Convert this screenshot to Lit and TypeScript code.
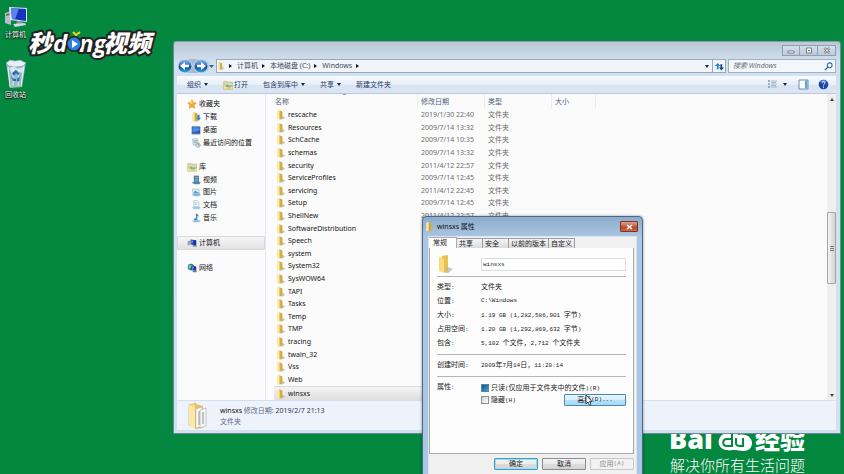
import { LitElement, html, svg, css } from "lit";
import { customElement, property } from "lit/decorators.js";
import { classMap } from "lit/directives/class-map.js";

const folder = svg`
  <path d="M2 1l4-1v12l-4 1z" fill="#f3d67c"/><path d="M6 1l3 1v11H3l3-1z" fill="#d8a83a"/>
  <path d="M2 1l2-.5v12.500l-2-.5z" fill="#fdeeb0"/><path d="M9 8l4 3-4 2H7z" fill="#c4b68e" opacity=".8"/>
  <path d="M6 1v11" stroke="#b98c28" stroke-width=".6"/>`;

const library = svg`
  <path d="M1 2h5l1 1h7v10H1z" fill="#f1d272"/><path d="M3 4h10v6H3z" fill="#bfe0ee"/>
  <path d="M3 8l3-2 3 2 4-1v3H3z" fill="#77b987"/><path d="M1 9h4v4H1zM11 9h3v4h-3z" fill="#f9e7a5"/>
  <path d="M1 2h5l1 1h7v10H1z" fill="none" stroke="#c39a3c" stroke-width=".6"/>`;

const icons: Record<string, unknown> = {
  folder,
  library,
  star: svg`<path d="M7 1l2 4 4 .6-3 3 .8 4.4L7 11l-3.800 2L4 8.600 1 5.600 5 5z" fill="#f7a92b" stroke="#dd7d13" stroke-width=".6"/><path d="M7 2l1 4-4 1z" fill="#ffe08a"/>`,
  download: svg`${folder}<path d="M9 4h3v4h2l-3.500 4L7 8h2z" fill="#2a86c9"/>`,
  desk: svg`<path d="M1 2h12v10H1z" fill="#1f55b5"/><path d="M2 3h10v5L2 11z" fill="#4b8be2"/><path d="M1 12h12v1H1z" fill="#24416e"/>`,
  recent: svg`<path d="M2 1h7l1 3-1 6H3z" fill="#d8e3ea" stroke="#8fa3b3" stroke-width=".6"/><path d="M4 4h5M4 6h4" stroke="#7490a5"/><circle cx="10" cy="10" r="3" fill="#dcebf5" stroke="#5a7f9c" stroke-width=".8"/><path d="M10 8v2h2" stroke="#345" fill="none" stroke-width=".7"/>`,
  video: svg`<path d="M4 1h7v9H4z" fill="#3c6079"/><path d="M5 2h5v3H5zM5 6h5v3H5z" fill="#79acd0"/><path d="M1 11l4-2h6l3 2-3 2H5z" fill="#4d86b1"/>`,
  picture: svg`<path d="M2 3h9l1 6H3z" fill="#e6f1f8" stroke="#6d9cbd" stroke-width=".7"/><path d="M3 8l3-3 3 2 2 1v1z" fill="#5ba0cc"/><path d="M1 11l4-2h6l3 2-3 2H5z" fill="#7fb8dc"/>`,
  doc: svg`<path d="M4 1h5l2 2v7H4z" fill="#f5f9fc" stroke="#8ba8bd" stroke-width=".7"/><path d="M5 4h4M5 6h4" stroke="#9ab3c4" stroke-width=".8"/><path d="M1 11l4-2h6l3 2-3 2H5z" fill="#9dcbe6"/>`,
  music: svg`<path d="M8 1v8" stroke="#1f6fb8" stroke-width="1.500"/><path d="M8 1c1 2 3 2 3 5-1-2-2-2-3-2z" fill="#1f6fb8"/><ellipse cx="6.500" cy="9" rx="2.300" ry="1.600" fill="#2b82cf"/><path d="M1 11l4-1h6l3 1-3 2H5z" fill="#86bfe2"/>`,
  computer: svg`<path d="M5 2l8 1v7l-8-1z" fill="#1735a8"/><path d="M6 3l3 .4-2 5.600-1-.1z" fill="#6f93ea"/><path d="M1 4h3v6H1z" fill="#8f9cab"/><path d="M8 10h5l1 2H8z" fill="#58697a"/>`,
  network: svg`<circle cx="5.500" cy="5.500" r="4.500" fill="#2c8b86"/><path d="M2 3c2 1 4-1 5 1s-2 3-4 4z" fill="#8bd0a0"/><path d="M6 4l7 1v6l-7-1z" fill="#1a37a5"/><path d="M7 5l3 .5-2 4H7z" fill="#6d96ea"/><path d="M8 11h5l1 2H8z" fill="#6b7c8d"/>`,
};

const icon = (name: string) =>
  html`<svg class="ico" viewBox="0 0 14 14" aria-hidden="true">${icons[name]}</svg>`;

const navGroups: { label: string; icon: string; items: [string, string][]; active?: boolean }[] = [
  { label: "收藏夹", icon: "star", items: [["download", "下载"], ["desk", "桌面"], ["recent", "最近访问的位置"]] },
  { label: "库", icon: "library", items: [["video", "视频"], ["picture", "图片"], ["doc", "文档"], ["music", "音乐"]] },
  { label: "计算机", icon: "computer", items: [], active: true },
  { label: "网络", icon: "network", items: [] },
];

const files: [string, string][] = [
  ["rescache", "2019/1/30 22:40"],
  ["Resources", "2009/7/14 13:32"],
  ["SchCache", "2009/7/14 10:35"],
  ["schemas", "2009/7/14 13:32"],
  ["security", "2011/4/12 22:57"],
  ["ServiceProfiles", "2009/7/14 12:45"],
  ["servicing", "2011/4/12 22:45"],
  ["Setup", "2009/7/14 12:45"],
  ["ShellNew", "2011/4/12 22:57"],
  ["SoftwareDistribution", ""],
  ["Speech", ""],
  ["system", ""],
  ["System32", ""],
  ["SysWOW64", ""],
  ["TAPI", ""],
  ["Tasks", ""],
  ["Temp", ""],
  ["TMP", ""],
  ["tracing", ""],
  ["twain_32", ""],
  ["Vss", ""],
  ["Web", ""],
  ["winsxs", ""],
];

const base = css`
  :host, * { box-sizing: border-box; }
  button, input { font: inherit; color: inherit; margin: 0; padding: 0; border: 0; background: none; outline: 0; }
  button { display: flex; align-items: center; white-space: nowrap; }
  .ico { width: 10px; height: 10px; flex: none; display: block; }
`;

@customElement("explorer-window")
export class ExplorerWindow extends LitElement {
  static styles = [base, css`
    :host {
      display: flex; flex-direction: column; padding: 0 4px 3px 3px;
      border: 1px solid #6f8797; border-top-color: #8b9ca9; border-radius: 3px 3px 0 0;
      background: linear-gradient(#b9c7d7, #d2e0ee 20px, #d3e1f1 60px, #d3e0f0);
      font: 7px/12px "Noto Sans", "Noto Sans CJK SC", sans-serif; color: #111;
    }
    .caption { display: flex; justify-content: flex-end; height: 17px; padding-top: 3px; }
    .caption button { width: 18px; height: 11px; justify-content: center; border: 1px solid #8fa0b2; border-left-width: 0; background: linear-gradient(#d4dfeb, #bccada); }
    .caption button:first-child { border-left-width: 1px; }
    .caption svg { width: 8px; height: 7px; }
    .address { display: flex; align-items: center; height: 14px; gap: 2px; }
    .history { display: flex; align-items: center; width: 37px; }
    .history svg { width: 37px; height: 16px; flex: none; }
    .path { flex: 1; display: flex; align-items: center; height: 14px; border: 1px solid #9aa9b8; background: #f1f5fa; color: #3a4a5c; }
    .path .ico { width: 8px; }
    .crumb::after { content: ""; border: 2px solid transparent; border-left: 3px solid #111; border-right: 0; margin: 0 5px 0 4px; }
    .drop { margin-left: auto; width: 10px; justify-content: center; }
    .drop::after, .menu::after { content: ""; border: 2px solid transparent; border-top: 3px solid #14264a; border-bottom: 0; }
    .refresh { width: 13px; height: 12px; justify-content: center; border-left: 1px solid #9aa9b8; }
    .refresh svg { width: 9px; height: 9px; }
    .search { display: flex; align-items: center; width: 108px; height: 14px; border: 1px solid #a3b1bf; background: #f3f6fa; }
    .search input { flex: 1; min-width: 0; padding-left: 4px; font-style: italic; }
    .search input::placeholder { color: #67717c; opacity: 1; }
    .search svg { width: 9px; height: 9px; margin: 0 2px; }
    .toolbar { display: flex; align-items: center; height: 18px; margin-top: 3px; padding: 0 7px 0 10px; color: #1f3a66; border-bottom: 1px solid #b9c8dc;
      background: linear-gradient(#f8fbff, #e8eff9 50%, #d9e4f3 51%, #dbe6f4); }
    .menu::after { margin-left: 3px; }
    .menu, .tool { margin-right: 15px; }
    .tool .ico { margin-right: 1px; }
    .spacer { flex: 1; }
    .viewico { width: 11px; height: 11px; }
    .toolbar .view { margin-right: 11px; }
    .toolbar .view::after { margin-left: 5px; }
    .toolbar .pane { margin-right: 9px; }
    .body { display: flex; background: #fbfbfb; }
    nav { width: 89px; flex: none; border-right: 1px solid #dfe9f5; padding-top: 4px; display: flex; flex-direction: column; gap: 12px; }
    nav ul { list-style: none; margin: 0; padding: 0; display: grid; grid-auto-rows: 1fr; }
    .g4 { height: 51px; } .g5 { height: 63px; } .g1 { height: 13px; }
    nav li { display: flex; align-items: center; gap: 2px; padding-left: 14px; }
    nav li:first-child { padding-left: 10px; }
    nav li.active:first-child { padding-left: 9px; border: 1px solid #d9d9d9; border-radius: 1px; background: linear-gradient(#f6f6f6, #e1e1e1); }
    .files { flex: 1; min-width: 0; padding-left: 8px; }
    table { width: 100%; height: 306px; border-collapse: separate; border-spacing: 0; table-layout: fixed; }
    .cn { width: 144px; } .cd { width: 67px; } .ct { width: 67px; } .cs { width: 44px; }
    th, td { padding: 0; text-align: left; font-weight: 400; white-space: nowrap; line-height: 12px; }
    th { height: 15px; padding-top: 1px; color: #4c607a; border-right: 1px solid #e6edf5; padding-left: 3px; }
    th:first-child { padding-left: 1px; background: linear-gradient(#7ba7c8, #7ba7c8) 69px 0 / 3px 1px no-repeat; }
    th:last-child { border: 0; }
    td { color: #6d6d6d; padding-left: 3px; }
    td.name { color: #151515; padding-left: 2px; }
    .cell { display: flex; align-items: center; gap: 2px; }
    tr.selected td { background: linear-gradient(#f4f4f4, #dedede); border-top: 1px solid #d9d9d9; }
    tr.selected td:last-child { background: none; border: 0; }
    .scroll { width: 9px; flex: none; display: flex; flex-direction: column; align-items: center; background: #efefef; padding: 4px 0 3px; }
    .up, .down { border: 2px solid transparent; }
    .up { border-bottom: 3px solid #444; border-top: 0; }
    .down { border-top: 3px solid #444; border-bottom: 0; margin-top: auto; }
    .thumb { width: 9px; height: 72px; margin-top: 111px; border: 1px solid #a5a5a5; border-radius: 1px; background: linear-gradient(90deg, #f5f5f5, #d3d3d3); display: flex; align-items: center; justify-content: center; }
    .thumb::after { content: ""; width: 4px; height: 5px; background: repeating-linear-gradient(#777 0 1px, transparent 1px 2px); }
    .details { display: flex; align-items: center; height: 30px; padding-left: 11px; gap: 12px; background: #edf2fb; border-top: 1px solid #d2dfec; }
    .details svg { width: 20px; height: 28px; }
    .details p { margin: 0; line-height: 11px; color: #5d6d83; }
    .details b { font-weight: 400; color: #111; }
    .details span { color: #26385a; }
  `];

  render() {
    return html`
      <div class="caption">
        <button aria-label="最小化"><svg viewBox="0 0 8 7"><path d="M1 4h6v2H1z" fill="#fff" stroke="#56606c" stroke-width=".7"/></svg></button>
        <button aria-label="最大化"><svg viewBox="0 0 8 7"><path d="M1.500 1h5v5h-5z" fill="#fff" stroke="#56606c" stroke-width=".8"/><path d="M3 3h2v1H3z" fill="#56606c"/></svg></button>
        <button aria-label="关闭"><svg viewBox="0 0 8 7"><path d="M1.500 1l5 5m0-5l-5 5" stroke="#56606c" stroke-width="2.200"/><path d="M1.500 1l5 5m0-5l-5 5" stroke="#fff"/></svg></button>
      </div>
      <div class="address">
        <div class="history">
          <svg viewBox="0 0 37 16" role="img" aria-label="后退 前进">
            <defs><linearGradient id="orb" x2="0" y2="1"><stop stop-color="#9cc6ec"/><stop offset=".48" stop-color="#2b6fbd"/><stop offset=".5" stop-color="#0d3f8b"/><stop offset="1" stop-color="#39b0ec"/></linearGradient></defs>
            <path d="M8 1h17a7 7 0 0 1 7 7 7 7 0 0 1-7 7H8z" fill="#aab9ca"/>
            <circle cx="8" cy="8" r="7" fill="url(#orb)" stroke="#dfe9f3" stroke-width=".8"/>
            <circle cx="24" cy="8" r="7" fill="url(#orb)" stroke="#dfe9f3" stroke-width=".8"/>
            <path d="M3 8l5-4v2.800h4v2.400H8V12z" fill="#fff"/><path d="M29 8l-5-4v2.800h-4v2.400h4V12z" fill="#fff"/>
            <path d="M32 7h5l-2.500 3z" fill="#2f6094"/>
          </svg>
        </div>
        <div class="path">
          ${icon("folder")}
          <button class="crumb" aria-label="根"></button>
          <button class="crumb">计算机</button>
          <button class="crumb">本地磁盘 (C:)</button>
          <button class="crumb">Windows</button>
          <button class="drop" aria-label="历史记录"></button>
          <button class="refresh" aria-label="刷新"><svg viewBox="0 0 10 10"><path d="M3 1L0 4.500h2V8h2V4.500h2z" fill="#2784cf"/><path d="M6 2.500h2V6h2L7 9.500 4.500 6H6z" fill="#173f86"/></svg></button>
        </div>
        <label class="search"><input placeholder="搜索 Windows" aria-label="搜索 Windows"><svg viewBox="0 0 10 10"><circle cx="6.300" cy="3.700" r="2.700" fill="#fff" stroke="#2c6ba6" stroke-width="1.200"/><path d="M4.300 5.700L1 9" stroke="#2c6ba6" stroke-width="1.500"/></svg></label>
      </div>
      <div class="toolbar">
        <button class="menu">组织</button>
        <button class="tool">${icon("library")}打开</button>
        <button class="menu">包含到库中</button>
        <button class="menu">共享</button>
        <button>新建文件夹</button>
        <span class="spacer"></span>
        <button class="menu view" aria-label="更改视图"><svg class="viewico" viewBox="0 0 11 11"><path d="M1 2h2M1 5h2M1 8h2" stroke="#7d93ab" stroke-width="1.500"/><path d="M4 2h6M4 5h6M4 8h6M4 3.500h5M4 6.500h5" stroke="#98a8ba" stroke-width=".8"/></svg></button>
        <button class="pane" aria-label="预览窗格"><svg class="viewico" viewBox="0 0 11 11"><path d="M1 1h9v9H1z" fill="#fff" stroke="#6e8ca8"/><path d="M7 1.500h2.500v8H7z" fill="#64a6c9"/></svg></button>
        <button aria-label="帮助"><svg class="viewico" viewBox="0 0 11 11"><circle cx="5.500" cy="5.500" r="4.800" fill="#1d45a8"/><path d="M2 3a4 4 0 0 1 7 0z" fill="#6d92dc"/><path d="M4 4.200c0-2 3-2 3-.2 0 1.200-1.500 1-1.500 2.400M5.500 7.500v1.200" stroke="#fff" fill="none"/></svg></button>
      </div>
      <div class="body">
        <nav>
          ${navGroups.map((g) => html`<ul class="g${g.items.length + 1}">
            <li class=${classMap({ active: !!g.active })}>${icon(g.icon)}${g.label}</li>
            ${g.items.map(([i, label]) => html`<li>${icon(i)}${label}</li>`)}
          </ul>`)}
        </nav>
        <div class="files">
          <table>
            <colgroup><col class="cn"><col class="cd"><col class="ct"><col class="cs"><col></colgroup>
            <thead><tr><th>名称</th><th>修改日期</th><th>类型</th><th>大小</th><th></th></tr></thead>
            <tbody>
              ${files.map(([name, date]) => html`<tr class=${classMap({ selected: name === "winsxs" })}>
                <td class="name"><div class="cell">${icon("folder")}${name}</div></td>
                <td>${date}</td><td>${date ? "文件夹" : ""}</td><td></td><td></td>
              </tr>`)}
            </tbody>
          </table>
        </div>
        <div class="scroll"><i class="up"></i><i class="thumb"></i><i class="down"></i></div>
      </div>
      <div class="details">
        <svg viewBox="0 0 20 28"><path d="M1 3l7-2v25l-7-3z" fill="#f6dc87" stroke="#cfa94a" stroke-width=".6"/><path d="M7 2l8 2v22l-8 1z" fill="#e3c063"/><path d="M8 7l6-2v19l-6 2z" fill="#fff" stroke="#aaa" stroke-width=".5"/><path d="M12 8l6-2v18l-6 2z" fill="#f5f5f5" stroke="#999" stroke-width=".5"/><path d="M11 9v14M15 10v12" stroke="#777" stroke-width=".8"/><path d="M1 3l6 3v21l-6-4z" fill="#fbe9a9"/></svg>
        <div>
          <p><b>winsxs</b> 修改日期: <span>2019/2/7 21:13</span></p>
          <p>文件夹</p>
        </div>
      </div>`;
  }
}

@customElement("properties-dialog")
export class PropertiesDialog extends LitElement {
  @property() name = "winsxs";

  static styles = [base, css`
    :host {
      display: block; padding: 0 5px 6px; border: 1px solid #44698c; border-radius: 4px 4px 0 0;
      background: linear-gradient(#8eabcb, #abc6e2 20px, #a9c6e5); color: #222;
      font: 6px/10px "Liberation Mono", "Noto Sans CJK SC", monospace;
      box-shadow: 0 0 3px #0006;
    }
    .cj { font-size: 7px; }
    header { display: flex; align-items: center; gap: 2px; height: 19px; margin-left: -3px; font: 7px/12px "Noto Sans", "Noto Sans CJK SC", sans-serif; color: #111; }
    .close { width: 18px; height: 11px; margin: 0 -1px 0 auto; justify-content: center; border: 1px solid #7c3528; border-radius: 1px; background: linear-gradient(#dea08e, #c55a40 50%, #b43a20 51%, #cf6a45); }
    .close svg { width: 7px; height: 6px; }
    .client { background: #f0f0f0; border: 1px solid #d8e4f0; padding: 0 2px 8px 0; }
    .tabs { display: flex; align-items: flex-end; height: 11px; }
    .tabs button { height: 10px; padding: 0 2px; border: 1px solid #9b9ea3; border-width: 1px 1px 0 0; background: linear-gradient(#f3f3f3, #dcdcdc); }
    .tabs .short { width: 26px; }
    .tabs .on { width: 28px; height: 11px; padding-left: 4px; padding-bottom: 1px; border-color: #aaa; background: #fdfdfd; }
    .panel { height: 206px; padding: 5px 7px 0; background: #fdfdfd; border: 1px solid #a5a8ad; border-top: 0; }
    .row { display: grid; grid-template-columns: 44px 1fr; align-items: center; height: 14px; }
    .title { height: 19px; margin-top: 1px; }
    .big { width: 18px; height: 20px; display: block; }
    .row input[type="text"] { height: 13px; width: 100%; border: 1px solid #dadde3; padding-left: 1px; background: #fff; }
    hr { border: 0; height: 1px; margin: 0; background: #b5b5b5; }
    .first, .mid { margin: 3px 0; }
    .mid { margin-top: 4px; }
    .attrs { display: grid; grid-template-columns: 44px 1fr; padding-top: 2px; }
    .checks { display: grid; grid-template-columns: 1fr 62px; }
    .checks label { display: flex; align-items: center; gap: 2px; height: 12px; white-space: nowrap; }
    .checks label:first-child { grid-column: 1 / 3; }
    .checks input { appearance: none; width: 8px; height: 8px; border: 1px solid #8b8f94; background: linear-gradient(135deg, #cfcfcf, #fff); flex: none; }
    .checks input:indeterminate { border-color: #5587a0; background: linear-gradient(135deg, #1a4f80, #39a6d8); }
    .push { justify-content: center; height: 12px; border: 1px solid #8a8d92; border-radius: 1px; background: linear-gradient(#f4f4f4, #ebebeb 50%, #dcdcdc 51%, #d4d4d4); }
    .hot { border-color: #4789b5; background: linear-gradient(#e6f5fd, #d5eefc 50%, #b7e1f9 51%, #a8d8f3); }
    .footer { display: flex; justify-content: flex-end; gap: 4px; padding-top: 4px; }
    .footer .push { width: 44px; }
    .footer .default { border-color: #3f9fc5; box-shadow: inset 0 0 0 1px #9edcf2; }
    .footer .push:disabled { border-color: #c5c8cb; background: #f2f2f2; color: #8b8b8b; }
  `];

  /** Sets the Chinese runs one size above the half-width Latin ones. */
  private mixed(text: string) {
    return text.split(/([\u3000-\u9fff\uff00-\uffef]+)/).map((part, i) => (i % 2 ? html`<span class="cj">${part}</span>` : part));
  }

  private row(label: string, value: string) {
    return html`<div class="row"><span>${this.mixed(label)}</span><span>${this.mixed(value)}</span></div>`;
  }

  render() {
    return html`
      <header>${icon("folder")}${this.name} 属性
        <button class="close" aria-label="关闭"><svg viewBox="0 0 7 6"><path d="M1 1l5 4m0-4L1 5" stroke="#fff" stroke-width="1.600"/></svg></button>
      </header>
      <div class="client">
        <div class="tabs" role="tablist">
          <button role="tab" class="on cj">常规</button><button role="tab" class="short cj">共享</button>
          <button role="tab" class="short cj">安全</button><button role="tab" class="cj">以前的版本</button>
          <button role="tab" class="cj">自定义</button>
        </div>
        <div class="panel">
          <div class="row title">
            <svg class="big" viewBox="0 0 18 20"><path d="M2 3l6-2v17l-6-2z" fill="#fff0a8"/><path d="M5 2l6-1v16l-5 2z" fill="#e8c04f"/><path d="M2 3l5 2v14l-5-2z" fill="#f8dd7c"/><path d="M11 13l5 2-5 4H8z" fill="#aab1b5" opacity=".7"/></svg>
            <input type="text" aria-label="名称" .value=${this.name}>
          </div>
          <hr class="first">
          ${this.row("类型:", "文件夹")}
          ${this.row("位置:", "C:\\Windows")}
          ${this.row("大小:", "1.19 GB (1,282,586,901 字节)")}
          ${this.row("占用空间:", "1.20 GB (1,292,869,632 字节)")}
          ${this.row("包含:", "5,102 个文件，2,712 个文件夹")}
          <hr class="mid">
          ${this.row("创建时间:", "2009年7月14日，11:20:14")}
          <hr class="mid">
          <div class="attrs">
            <span>${this.mixed("属性:")}</span>
            <div class="checks">
              <label><input type="checkbox" .indeterminate=${true}><span>${this.mixed("只读(仅应用于文件夹中的文件)(R)")}</span></label>
              <label><input type="checkbox"><span>${this.mixed("隐藏(H)")}</span></label>
              <button class="push hot">${this.mixed("高级(D)...")}</button>
            </div>
          </div>
        </div>
        <div class="footer">
          <button class="push default cj">确定</button>
          <button class="push cj">取消</button>
          <button class="push" disabled>${this.mixed("应用(A)")}</button>
        </div>
      </div>`;
  }
}

@customElement("app-root")
export class AppRoot extends LitElement {
  static styles = css`
    :host { display: block; position: relative; height: 100vh; overflow: hidden; background: #04873f; font-family: "Noto Sans", "Noto Sans CJK SC", sans-serif; }
    .shortcuts { display: flex; flex-direction: column; gap: 18px; width: 31px; padding-top: 5px; }
    .shortcut { display: flex; flex-direction: column; align-items: center; color: #fff; font-size: 7px; line-height: 12px; text-shadow: 0 1px 1px #000, 0 0 2px #000; text-decoration: none; }
    .shortcut svg { width: 24px; height: 24px; }
    .shortcut .bin { height: 30px; }
    .watermark { position: absolute; left: 24px; top: 24px; width: 136px; height: 40px; }
    .watermark text { font: italic 900 24px "Noto Sans CJK SC", sans-serif; fill: #fff; stroke: #222; stroke-width: 4px; stroke-linejoin: round; paint-order: stroke; }
    .watermark .latin { font-family: "Open Sans", sans-serif; font-weight: 700; }
    .brand { position: absolute; right: 39px; top: 425px; width: 140px; color: #fff; }
    .brand svg { display: block; width: 140px; height: 30px; }
    .brand text { fill: #fff; font: 900 25px "Noto Sans CJK SC", sans-serif; }
    .brand .bai { font: 800 27px "Open Sans", sans-serif; }
    .brand p { margin: 0; padding-left: 5px; font: 300 15px/20px "Noto Sans CJK SC", sans-serif; white-space: nowrap; }
    explorer-window { position: absolute; left: 173px; right: 3px; top: 41px; }
    properties-dialog { position: absolute; left: 422px; top: 216px; width: 221px; }
    .pointer { position: absolute; left: 585px; top: 394px; width: 8px; height: 12px; }
  `;

  render() {
    return html`
      <div class="shortcuts">
        <a class="shortcut" href="#computer">
          <svg viewBox="0 0 24 24"><path d="M1 8l6-2v14l-6-2z" fill="#b6c0ca"/><path d="M2 9l4-1v2l-4 1z" fill="#68737e"/><path d="M5 2l18 1v14L6 15z" fill="#dfe6ee"/><path d="M7 3l15 1v12L8 14z" fill="#1733bb"/><path d="M7 3l8 .5L11 14.500 8 14z" fill="#5c82ee"/><path d="M13 16h5l1 3h-7z" fill="#8495a3"/><path d="M9 19l12-1 1 2-11 2z" fill="#d2dae2"/></svg>
          计算机
        </a>
        <a class="shortcut" href="#recycle">
          <svg class="bin" viewBox="0 0 24 30"><path d="M2 4l20-1-4 25-12 1z" fill="#a9c2d0" opacity=".9"/><path d="M2 4l4-3 5 1 5-1 6 3-3 3-7 1-7-1z" fill="#e6eff4" stroke="#8aa2b1" stroke-width=".7"/><path d="M5 9l5-2 4 3 6-2-1 6-6-2-5 3z" fill="#d5e3eb"/><path d="M4 8l2 20M20 7l-3 20M9 10v17M15 9l-1 18" stroke="#fff" stroke-width=".8"/><path d="M8 14l4-3 4 4-2 1-2-2-2 3zM7 17l2 5h3v-2h-2zM16 17l-1 5-2 1v-3z" fill="#1e6cc4"/></svg>
          回收站
        </a>
      </div>
      <svg class="watermark" viewBox="0 0 136 40" role="img" aria-label="秒dong视频">
        <text x="4" y="28">秒</text><text class="latin" x="29" y="28">d</text>
        <text class="latin" x="55" y="28">ng</text><text x="79" y="28">视频</text>
        <circle cx="50" cy="20" r="8" fill="#222"/><circle cx="50" cy="20" r="6.500" fill="#2d7fe6"/><path d="M48 16l6 4-6 4z" fill="#fff"/>
        <path d="M49 8l3 3 4-3" fill="none" stroke="#f7d51d" stroke-width="2"/>
      </svg>
      <div class="brand">
        <svg viewBox="0 0 140 30" role="img" aria-label="Baidu 经验">
          <text class="bai" x="4" y="24">Bai</text>
          <path d="M65 7c8 0 8 3 8 3s9-2 12 3c4 4 2 13-6 13-5 0-7-1-10-1s-4 1-7 0C50 24 51 8 65 7z" fill="#fff"/>
          <path d="M67 9v12h-5c-5 0-5-7 0-7h5M71 13v5c0 3 2 3 4 3h3v-8" fill="none" stroke="#04873f" stroke-width="2"/>
          <text x="90" y="24">经验</text>
        </svg>
        <p>解决你所有生活问题</p>
      </div>
      <explorer-window></explorer-window>
      <properties-dialog></properties-dialog>
      <svg class="pointer" viewBox="0 0 8 12" aria-hidden="true"><path d="M1 1v9l2-2 1.500 3.500 1.500-.7L4.600 7.500H7z" fill="#fff" stroke="#222" stroke-width=".8"/></svg>`;
  }
}
